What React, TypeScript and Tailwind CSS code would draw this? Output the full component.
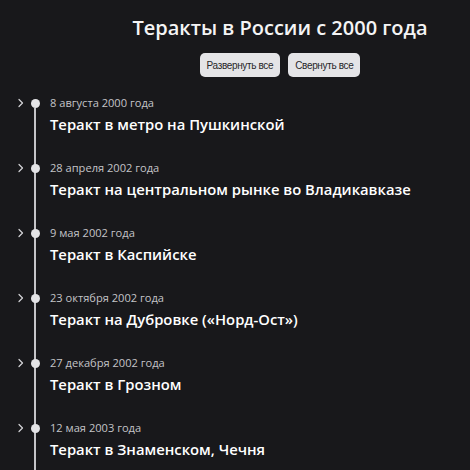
import React from "react";

const items = [
  { date: "8 августа 2000 года", title: "Теракт в метро на Пушкинской" },
  { date: "28 апреля 2002 года", title: "Теракт на центральном рынке во Владикавказе" },
  { date: "9 мая 2002 года", title: "Теракт в Каспийске" },
  { date: "23 октября 2002 года", title: "Теракт на Дубровке («Норд-Ост»)" },
  { date: "27 декабря 2002 года", title: "Теракт в Грозном" },
  { date: "12 мая 2003 года", title: "Теракт в Знаменском, Чечня" },
];

function Chevron() {
  return (
    <svg width="8" height="10" viewBox="0 0 8 10" fill="none" className="block">
      <path d="M2 1.5 L5.5 5 L2 8.5" stroke="#d4d4d8" strokeWidth="1.2" strokeLinecap="round" strokeLinejoin="round" />
    </svg>
  );
}

export default function App() {
  return (
    <div
      className="h-[470px] overflow-hidden bg-[#18181b] text-white"
      style={{ fontFamily: '"Open Sans", "Noto Sans", sans-serif' }}
    >
      <div className="flex flex-col items-center pl-[90px] pt-[13px]">
        <h1 className="text-[20px] leading-[30px] font-semibold text-[#f4f4f5]">Теракты в России с 2000 года</h1>
        <div className="mt-[10px] flex gap-[8px]" style={{ fontFamily: '"Liberation Sans", Arial, sans-serif' }}>
          <button className="h-[24px] rounded-[5px] bg-[#e4e4e7] px-[7px] text-[10px] tracking-[-0.35px] text-[#27272a]">Развернуть все</button>
          <button className="h-[24px] rounded-[5px] bg-[#e4e4e7] px-[7px] text-[10px] tracking-[-0.35px] text-[#27272a]">Свернуть все</button>
        </div>
      </div>
      <div className="relative mt-[17px] h-[400px] pl-[17px]">
        <div className="absolute left-[34px] top-[14px] bottom-0 w-[2px] bg-[#c4c4c8]" />
        <div className="flex flex-col gap-[22px]">
          {items.map((it) => (
            <div key={it.date} className="flex items-start">
              <div className="mt-[4px] flex w-[8px] justify-center">
                <Chevron />
              </div>
              <div className="ml-[6px] mt-[5px] h-[9px] w-[9px] shrink-0 rounded-full bg-[#e4e4e7] relative z-10" />
              <div className="ml-[10px] flex flex-col">
                <div className="h-[17px] text-[11.1px] leading-[17px] font-normal text-[#c4c4c8]">{it.date}</div>
                <div className="h-[26px] text-[14.8px] leading-[26px] font-semibold text-white whitespace-nowrap">{it.title}</div>
              </div>
            </div>
          ))}
        </div>
      </div>
    </div>
  );
}
